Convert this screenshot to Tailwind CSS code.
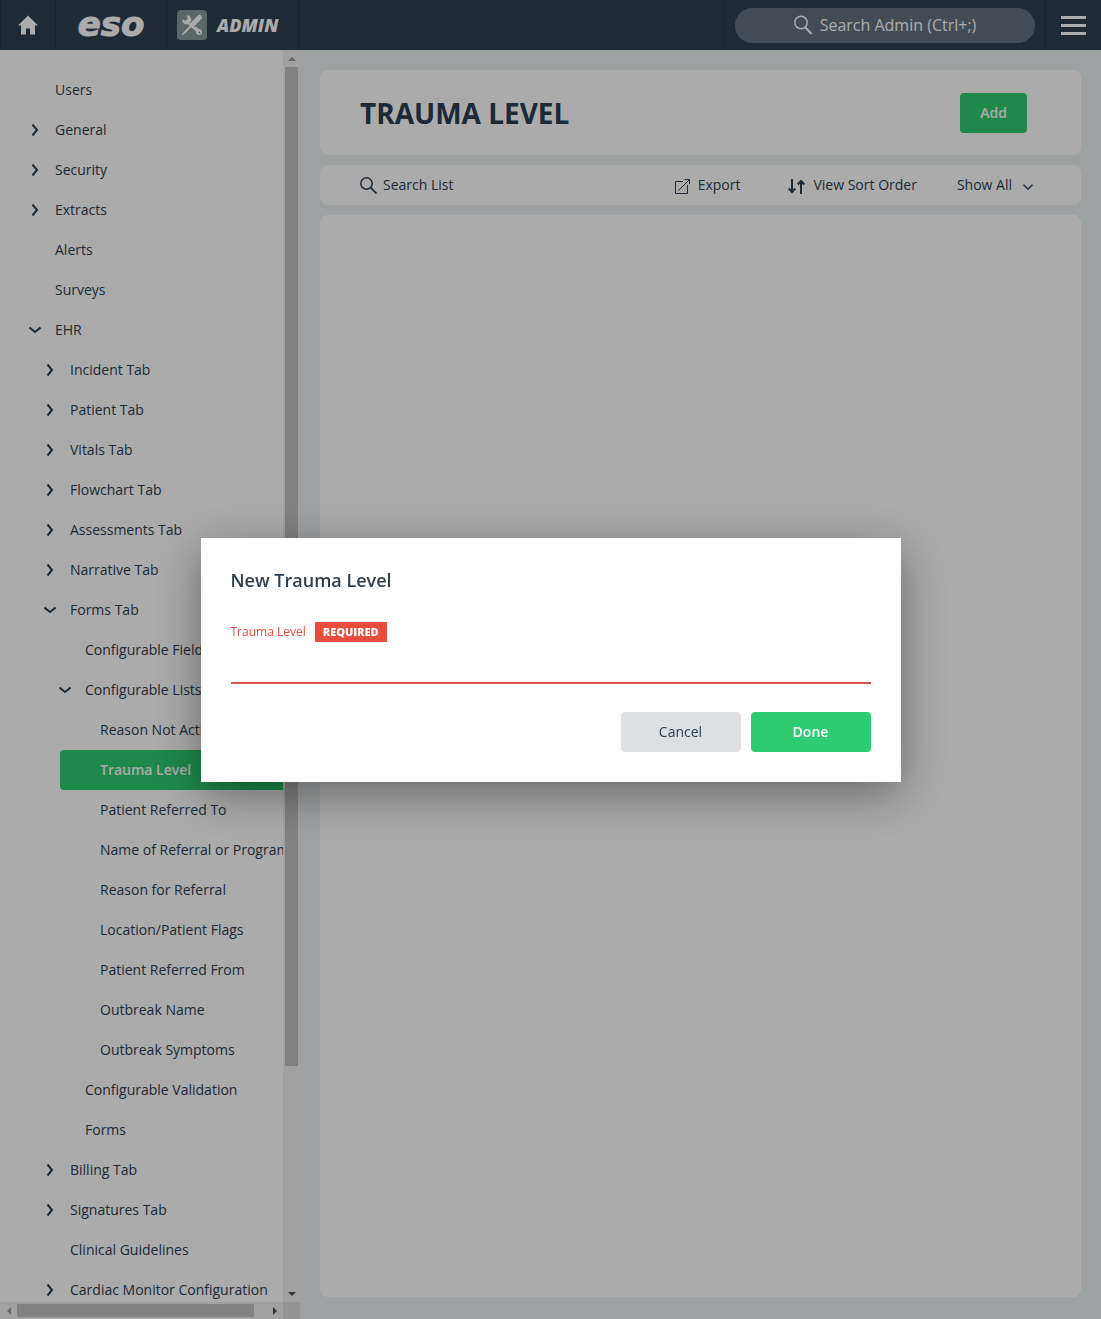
<!DOCTYPE html>
<html lang="en">

<head>
    <meta charset="UTF-8" />
    <meta name="viewport" content="width=device-width, initial-scale=1.0" />
    <title>ESO Admin - Trauma Level</title>
    <script src="https://cdn.jsdelivr.net/npm/@tailwindcss/browser@4"></script>
</head>

<body class="h-screen flex flex-col overflow-hidden bg-[#ecf0f1] font-['Open_Sans',sans-serif] text-sm text-[#2c3e50]">
    <!-- Top Bar -->
    <header class="h-[50px] shrink-0 flex bg-[#313f50] text-white">
        <a href="#" aria-label="Home" class="w-14 flex items-center justify-center border-x border-[#28323f]">
            <svg class="w-5 h-5" viewBox="0 0 20 20" fill="currentColor">
                <path d="M10 0.500 20 10.500H17V19.500H12V13.500H8V19.500H3V10.500H0z" />
            </svg>
        </a>
        <a href="#" class="w-[111px] flex items-center justify-center border-r border-[#28323f] font-['DejaVu_Sans',sans-serif] text-[34px] leading-none font-bold italic pb-0.5 [-webkit-text-stroke:1px_white]">eso</a>
        <a href="#" class="w-[132px] flex items-center gap-2.5 pl-2.5 border-r border-[#28323f]">
            <svg class="w-[30px] h-[30px]" viewBox="0 0 30 30">
                <rect width="30" height="30" rx="4" fill="#889a9a" />
                <!-- wrench -->
                <path d="M11 11 22 22" stroke="#fff" stroke-width="3.500" />
                <path d="M9.500 5.200A4.600 4.600 0 1 1 5.200 9.500L8.500 10.700 10.700 8.500z" fill="#fff" />
                <circle cx="22" cy="22" r="3" fill="#fff" />
                <circle cx="22.500" cy="22.500" r="1" fill="#889a9a" />
                <!-- screwdriver -->
                <path d="M13 17 7 23" stroke="#889a9a" stroke-width="4" />
                <path d="M15.500 14.500 7 23" stroke="#fff" stroke-width="2" />
                <path d="M5 25 6 22 8 24z" fill="#fff" />
                <path d="M15 15 22.500 7.500" stroke="#889a9a" stroke-width="7" />
                <path d="M15.500 14.500 22.500 7.500" stroke="#fff" stroke-width="5" stroke-linecap="round" />
                <path d="M12 13.500 16.500 18" stroke="#fff" stroke-width="2" />
            </svg>
            <span class="text-lg font-extrabold italic">ADMIN</span>
        </a>
        <div class="ml-auto flex items-center px-2.5 border-x border-[#28323f]">
            <button class="w-[300px] h-[35px] flex items-center justify-center gap-2 rounded-full bg-[#66717e] text-base">
                <svg class="w-[18px] h-5" viewBox="0 0 18 20" fill="none" stroke="currentColor" stroke-width="1.500">
                    <circle cx="7" cy="7.500" r="6.200" />
                    <path d="M11.300 12.300 17.500 19" stroke-width="2" />
                </svg>
                Search Admin (Ctrl+;)
            </button>
        </div>
        <button aria-label="Menu" class="w-[55px] flex flex-col items-center justify-center gap-[5px]">
            <span class="w-[25px] h-[3px] bg-white"></span>
            <span class="w-[25px] h-[3px] bg-white"></span>
            <span class="w-[25px] h-[3px] bg-white"></span>
        </button>
    </header>

    <div class="flex flex-1 min-h-0">
        <!-- Sidebar -->
        <aside class="w-[300px] shrink-0 grid grid-cols-[1fr_17px] grid-rows-[1fr_17px] bg-white">
            <nav class="min-w-0 min-h-0 overflow-hidden pt-5">
                <ul id="nav-list"></ul>
            </nav>
            <div class="flex flex-col items-center bg-[#f1f1f1]">
                <span class="h-[17px] flex items-center"><svg class="w-2 h-1" viewBox="0 0 8 4" fill="#999"><path d="M0 4 4 0 8 4z" /></svg></span>
                <div class="flex-1 w-[13px]">
                    <div class="h-[82%] bg-[#c1c1c1]"></div>
                </div>
                <span class="h-[17px] flex items-center"><svg class="w-2 h-1" viewBox="0 0 8 4" fill="#505050"><path d="M0 0 4 4 8 0z" /></svg></span>
            </div>
            <div class="flex items-center bg-[#f1f1f1]">
                <span class="w-[17px] flex justify-center"><svg class="w-1 h-2" viewBox="0 0 4 8" fill="#999"><path d="M4 0 0 4 4 8z" /></svg></span>
                <div class="flex-1 h-[13px]">
                    <div class="w-[95%] h-full bg-[#c1c1c1]"></div>
                </div>
                <span class="w-[17px] flex justify-center"><svg class="w-1 h-2" viewBox="0 0 4 8" fill="#505050"><path d="M0 0 4 4 0 8z" /></svg></span>
            </div>
            <div class="bg-[#dcdcdc]"></div>
        </aside>

        <!-- Main Content -->
        <main class="flex-1 min-w-0 flex flex-col gap-2.5 px-5 pt-5 pb-[22px]">
            <section class="h-[85px] shrink-0 flex items-center justify-between pl-10 pr-[54px] rounded-lg bg-white">
                <h1 class="text-[28px] font-bold">TRAUMA LEVEL</h1>
                <button class="h-10 px-5 rounded bg-[#2ecc71] text-white font-semibold">Add</button>
            </section>

            <section class="h-10 shrink-0 flex items-center pl-10 pr-12 rounded-lg bg-white">
                <label class="flex flex-1 items-center gap-1.5">
                    <svg class="w-[17px] h-[17px]" viewBox="0 0 17 17" fill="none" stroke="currentColor" stroke-width="1.500">
                        <circle cx="6.500" cy="6.500" r="5.700" />
                        <path d="M10.700 10.700 16.500 16.500" stroke-width="1.800" />
                    </svg>
                    <input type="text" aria-label="Search List" placeholder="Search List" class="w-40 outline-none placeholder:text-[#2c3e50]" />
                </label>
                <button class="flex items-center gap-2">
                    <svg class="w-[15px] h-[15px] mt-0.5" viewBox="0 0 15 15" fill="none" stroke="currentColor">
                        <path d="M8 2.500H.500V14.500H12.500V6M3.500 11.500 14 1M9.500 .500H14.500V5" />
                    </svg>
                    Export
                </button>
                <button class="flex items-center gap-2 ml-12">
                    <svg class="w-[17px] h-[15px] mt-0.5" viewBox="0 0 17 15" fill="none" stroke="currentColor" stroke-width="2">
                        <path d="M4 0V13M.700 9.500 4 13 7.300 9.500M13 15V2M9.700 5.500 13 2 16.300 5.500" />
                    </svg>
                    View Sort Order
                </button>
                <button class="flex items-center gap-[11px] ml-10">
                    Show All
                    <svg class="w-2.5 h-1.5 mt-1" viewBox="0 0 10 6" fill="none" stroke="currentColor" stroke-width="1.500">
                        <path d="M.500 .700 5 5 9.500 .700" />
                    </svg>
                </button>
            </section>

            <section class="flex-1 rounded-lg bg-white"></section>
        </main>
    </div>

    <!-- Modal -->
    <div class="fixed inset-0 flex items-center justify-center bg-black/33">
        <form role="dialog" aria-labelledby="dialog-title" class="w-[700px] p-[30px] bg-white shadow-[0_12px_45px_rgba(0,0,0,0.4)]">
            <h2 id="dialog-title" class="text-lg leading-6 font-semibold">New Trauma Level</h2>
            <label for="trauma-level" class="mt-[30px] h-5 flex items-center gap-[9px] text-xs text-[#e74c3c]">
                Trauma Level
                <span class="h-5 px-2 bg-[#e74c3c] text-white text-[11px] leading-5 font-extrabold">REQUIRED</span>
            </label>
            <input id="trauma-level" type="text" class="block w-full h-[42px] border-b-2 border-[#d9534a] outline-none" />
            <div class="mt-7 flex justify-end gap-2.5">
                <button type="button" class="w-[120px] h-10 rounded bg-[#dce0e3]">Cancel</button>
                <button type="button" class="w-[120px] h-10 rounded bg-[#2ecc71] text-white font-semibold">Done</button>
            </div>
        </form>
    </div>

    <script>
        // [label, depth, state]
        const items = [
            ["Users", 0],
            ["General", 0, "closed"],
            ["Security", 0, "closed"],
            ["Extracts", 0, "closed"],
            ["Alerts", 0],
            ["Surveys", 0],
            ["EHR", 0, "open"],
            ["Incident Tab", 1, "closed"],
            ["Patient Tab", 1, "closed"],
            ["Vitals Tab", 1, "closed"],
            ["Flowchart Tab", 1, "closed"],
            ["Assessments Tab", 1, "closed"],
            ["Narrative Tab", 1, "closed"],
            ["Forms Tab", 1, "open"],
            ["Configurable Fields", 2],
            ["Configurable Lists", 2, "open"],
            ["Reason Not Activated", 3],
            ["Trauma Level", 3, "selected"],
            ["Patient Referred To", 3],
            ["Name of Referral or Program", 3],
            ["Reason for Referral", 3],
            ["Location/Patient Flags", 3],
            ["Patient Referred From", 3],
            ["Outbreak Name", 3],
            ["Outbreak Symptoms", 3],
            ["Configurable Validation", 2],
            ["Forms", 2],
            ["Billing Tab", 1, "closed"],
            ["Signatures Tab", 1, "closed"],
            ["Clinical Guidelines", 1],
            ["Cardiac Monitor Configuration", 1, "closed"],
        ];

        const indents = ["ml-[15px]", "ml-[30px]", "ml-[45px]", "ml-[60px]"];

        const arrows = {
            closed: "M3.5 .5 8 6 3.5 11.5",
            open: "M.5 3.5 6 8 11.5 3.5",
        };

        function arrow(state) {
            if (!arrows[state]) return "";
            return `<svg class="w-3 h-3" viewBox="0 0 12 12" fill="none" stroke="currentColor" stroke-width="2"><path d="${arrows[state]}" /></svg>`;
        }

        document.getElementById("nav-list").innerHTML = items.map(([label, depth, state]) => `
            <li class="${indents[depth]}">
                <a href="#" class="h-10 flex items-center whitespace-nowrap ${state === "selected" ? "rounded-l bg-[#2ecc71] text-white font-semibold" : ""}">
                    <span class="w-10 shrink-0 pl-3.5">${arrow(state)}</span>${label}
                </a>
            </li>`).join("");
    </script>
</body>

</html>
